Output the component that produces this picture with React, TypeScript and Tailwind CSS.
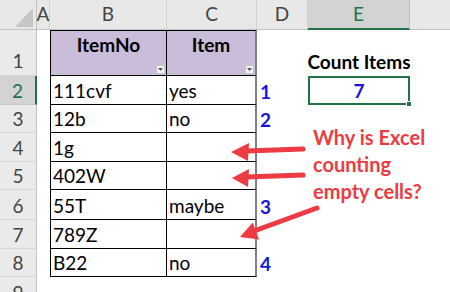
import React from "react";

type Row = { n: number; b: string; c: string; d?: string };

const rows: Row[] = [
  { n: 2, b: "111cvf", c: "yes", d: "1" },
  { n: 3, b: "12b", c: "no", d: "2" },
  { n: 4, b: "1g", c: "" },
  { n: 5, b: "402W", c: "" },
  { n: 6, b: "55T", c: "maybe", d: "3" },
  { n: 7, b: "789Z", c: "" },
  { n: 8, b: "B22", c: "no", d: "4" },
];

function FilterBtn() {
  return (
    <div className="absolute bottom-[1px] right-[1px] w-[9px] h-[9px] bg-[#f4f4f4] border border-[#c4c4c4] flex items-center justify-center">
      <svg width="5" height="3" viewBox="0 0 5 3">
        <polygon points="0,0 5,0 2.5,3" fill="#555" />
      </svg>
    </div>
  );
}

export default function App() {
  const hdr =
    "bg-[#e8e8e8] border-r border-r-[#d2d2d2] border-b border-b-[#c2c2c2] flex items-center justify-center text-[19px] text-[#444]";
  const rh =
    "bg-[#eaeaea] border-r border-r-[#c2c2c2] border-b border-b-[#d6d6d6] flex items-end justify-center pb-[1px] text-[19px] leading-[24px] text-[#444]";
  return (
    <div className="relative w-[450px] h-[292px] overflow-hidden bg-white font-[Lato,'Liberation_Sans',sans-serif]">
      <div className="grid grid-cols-[37px_13px_117px_90px_51px_102px_40px] grid-rows-[30px_46px_29px_28px_29px_28px_30px_29px_28px_15px]">
        {/* column headers */}
        <div className="bg-[#e8e8e8] border-r border-r-[#c2c2c2] border-b border-b-[#c2c2c2]">
          <svg width="36" height="29" viewBox="0 0 36 29">
            <polygon points="15,27 33,27 33,8" fill="#c6c6c6" />
          </svg>
        </div>
        <div className={hdr}>A</div>
        <div className={hdr}>B</div>
        <div className={hdr}>C</div>
        <div className={hdr}>D</div>
        <div className="bg-[#d3d3d3] border-r border-r-[#c2c2c2] border-b-2 border-b-[#217346] flex items-center justify-center text-[19px] text-[#217346]">
          E
        </div>
        <div className="bg-[#e8e8e8] border-b border-b-[#c2c2c2]"></div>

        {/* row 1 */}
        <div className={rh + " pb-[2px]"}>1</div>
        <div></div>
        <div className="relative bg-[#c9bdd9] border border-black flex justify-center pt-[2px] text-[19px] leading-[24px] font-bold text-black">
          ItemNo
          <FilterBtn />
        </div>
        <div className="relative bg-[#c9bdd9] border-t border-b border-t-black border-b-black border-r-2 border-r-[#808080] flex justify-center pt-[2px] text-[19px] leading-[24px] font-bold text-black">
          Item
          <FilterBtn />
        </div>
        <div></div>
        <div className="flex items-end justify-center pb-[2px] text-[19px] leading-[24px] font-bold text-black whitespace-nowrap overflow-visible">
          Count Items
        </div>
        <div></div>

        {rows.map((r) => (
          <React.Fragment key={r.n}>
            <div
              className={
                r.n === 2
                  ? "bg-[#d3d3d3] border-r-2 border-r-[#217346] border-b border-b-[#c8c8c8] flex items-end justify-center pb-[1px] text-[19px] leading-[24px] text-[#217346]"
                  : rh
              }
            >
              {r.n}
            </div>
            <div></div>
            <div className="border-l border-r border-b border-black flex items-end pl-[2px] pb-[1px] text-[19px] leading-[24px] text-black whitespace-nowrap">
              {r.b}
            </div>
            <div className="border-b border-b-black border-r-2 border-r-[#808080] flex items-end pl-[2px] pb-[1px] text-[19px] leading-[24px] text-black whitespace-nowrap">
              {r.c}
            </div>
            <div className="flex items-end pl-[3px] pb-[1px] text-[19px] leading-[24px] font-bold text-[#1616dc]">
              {r.d ?? ""}
            </div>
            {r.n === 2 ? (
              <div className="relative border-2 border-[#217346] flex items-end justify-center text-[19px] leading-[24px] font-bold text-[#1616dc]">
                7
                <div className="absolute right-[-4px] bottom-[-4px] w-[6px] h-[6px] bg-[#217346] border border-white"></div>
              </div>
            ) : r.n === 3 ? (
              <div className="relative z-10 overflow-visible">
                <div className="pt-[19px] pl-[5px] text-[20px] leading-[27px] font-bold text-[#ec3b42] whitespace-nowrap">
                  <div>Why is Excel</div>
                  <div>counting</div>
                  <div>empty cells?</div>
                </div>
              </div>
            ) : (
              <div></div>
            )}
            <div></div>
          </React.Fragment>
        ))}

        {/* row 9 */}
        <div className="bg-[#eaeaea] border-r border-r-[#c2c2c2] flex justify-center pt-[4px] text-[19px] leading-[24px] text-[#444]">
          9
        </div>
        <div></div>
        <div></div>
        <div></div>
        <div></div>
        <div></div>
        <div></div>
      </div>

      <svg
        className="absolute left-0 top-0 pointer-events-none"
        width="450"
        height="292"
        viewBox="0 0 450 292"
      >
        <g stroke="#ec3b42" strokeWidth="5" strokeLinecap="round" fill="none">
          <line x1="303" y1="149" x2="246" y2="151" />
          <line x1="303" y1="175" x2="246" y2="177" />
          <line x1="317" y1="208" x2="254" y2="231" />
        </g>
        <g fill="#ec3b42">
          <polygon points="231,152 249,143 248,161" />
          <polygon points="232,178 249,169 248,187" />
          <polygon points="240,237 252.7,222.6 259.1,239.4" />
        </g>
      </svg>
    </div>
  );
}
